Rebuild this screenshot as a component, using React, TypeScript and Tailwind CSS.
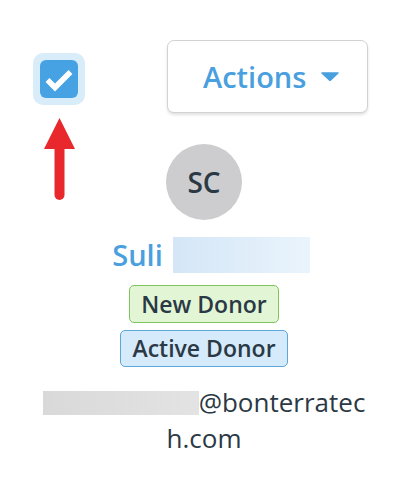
export default function App() {
  return (
    <div className="relative w-[411px] h-[480px] bg-white font-['Open_Sans',sans-serif] text-[#2b3945]">
      <div className="flex items-start pt-[40px] pl-[33px]">
        <div className="mt-[13px] w-[52px] h-[52px] rounded-[10px] bg-[#d9ecfa] flex items-center justify-center">
          <div className="w-[38px] h-[38px] rounded-[6px] bg-[#47a2e3] relative">
            <svg width="38" height="38" viewBox="0 0 38 38" className="absolute inset-0">
              <path d="M7.5 20 L15 27.5 L30.5 12" fill="none" stroke="#fff" strokeWidth="5.5" strokeLinejoin="miter" />
            </svg>
          </div>
        </div>
        <button className="ml-[82px] w-[201px] h-[73px] rounded-[7px] border border-[#d2d2d2] bg-white shadow-[0_2px_3px_rgba(0,0,0,0.12)] flex items-center pl-[35px] gap-[15px] text-[29px] font-semibold text-[#4a9fdf]">
          <span>Actions</span>
          <svg width="18" height="9" viewBox="0 0 18 9">
            <path d="M1 1 L17 1 L9 8.5 Z" fill="#4a9fdf" stroke="#4a9fdf" strokeWidth="1.5" strokeLinejoin="round" />
          </svg>
        </button>
      </div>

      <svg width="34" height="86" viewBox="0 0 34 86" className="absolute left-[43px] top-[116px]">
        <path d="M16.5 2 L32 33 L1 33 Z" fill="#e8282d" />
        <rect x="11.5" y="28" width="10" height="56" rx="5" fill="#e8282d" />
      </svg>

      <div className="flex flex-col items-center pr-[3px] mt-[31px]">
        <div className="w-[76px] h-[76px] rounded-full bg-[#cdcdcf] flex items-center justify-center text-[28px] font-semibold text-[#2b3945]">
          SC
        </div>
        <div className="mt-[17px] ml-[14px] flex items-center h-[36px]">
          <span className="text-[29px] font-semibold text-[#4a9fdf] leading-[36px]">Suli</span>
          <div className="ml-[10px] w-[137px] h-[36px] bg-gradient-to-r from-[#d4e6f7] to-[#eaf4fc]" />
        </div>
        <div className="mt-[12px] h-[38px] px-[11px] flex items-center rounded-[5px] border border-[#7fc45c] bg-[#e2f6d5] text-[23px] font-semibold leading-none">
          New Donor
        </div>
        <div className="mt-[7px] h-[37px] px-[11px] flex items-center rounded-[5px] border border-[#5da7dd] bg-[#d5eafa] text-[23px] font-semibold leading-none">
          Active Donor
        </div>
        <div className="mt-[17px] w-[330px] text-center break-all text-[26px] leading-[36px]">
          <span className="inline-block w-[156px] h-[24px] align-[-3px] bg-gradient-to-r from-[#d9d9d9] to-[#e3e3e3]" />
          @bonterratech.com
        </div>
      </div>
    </div>
  );
}
